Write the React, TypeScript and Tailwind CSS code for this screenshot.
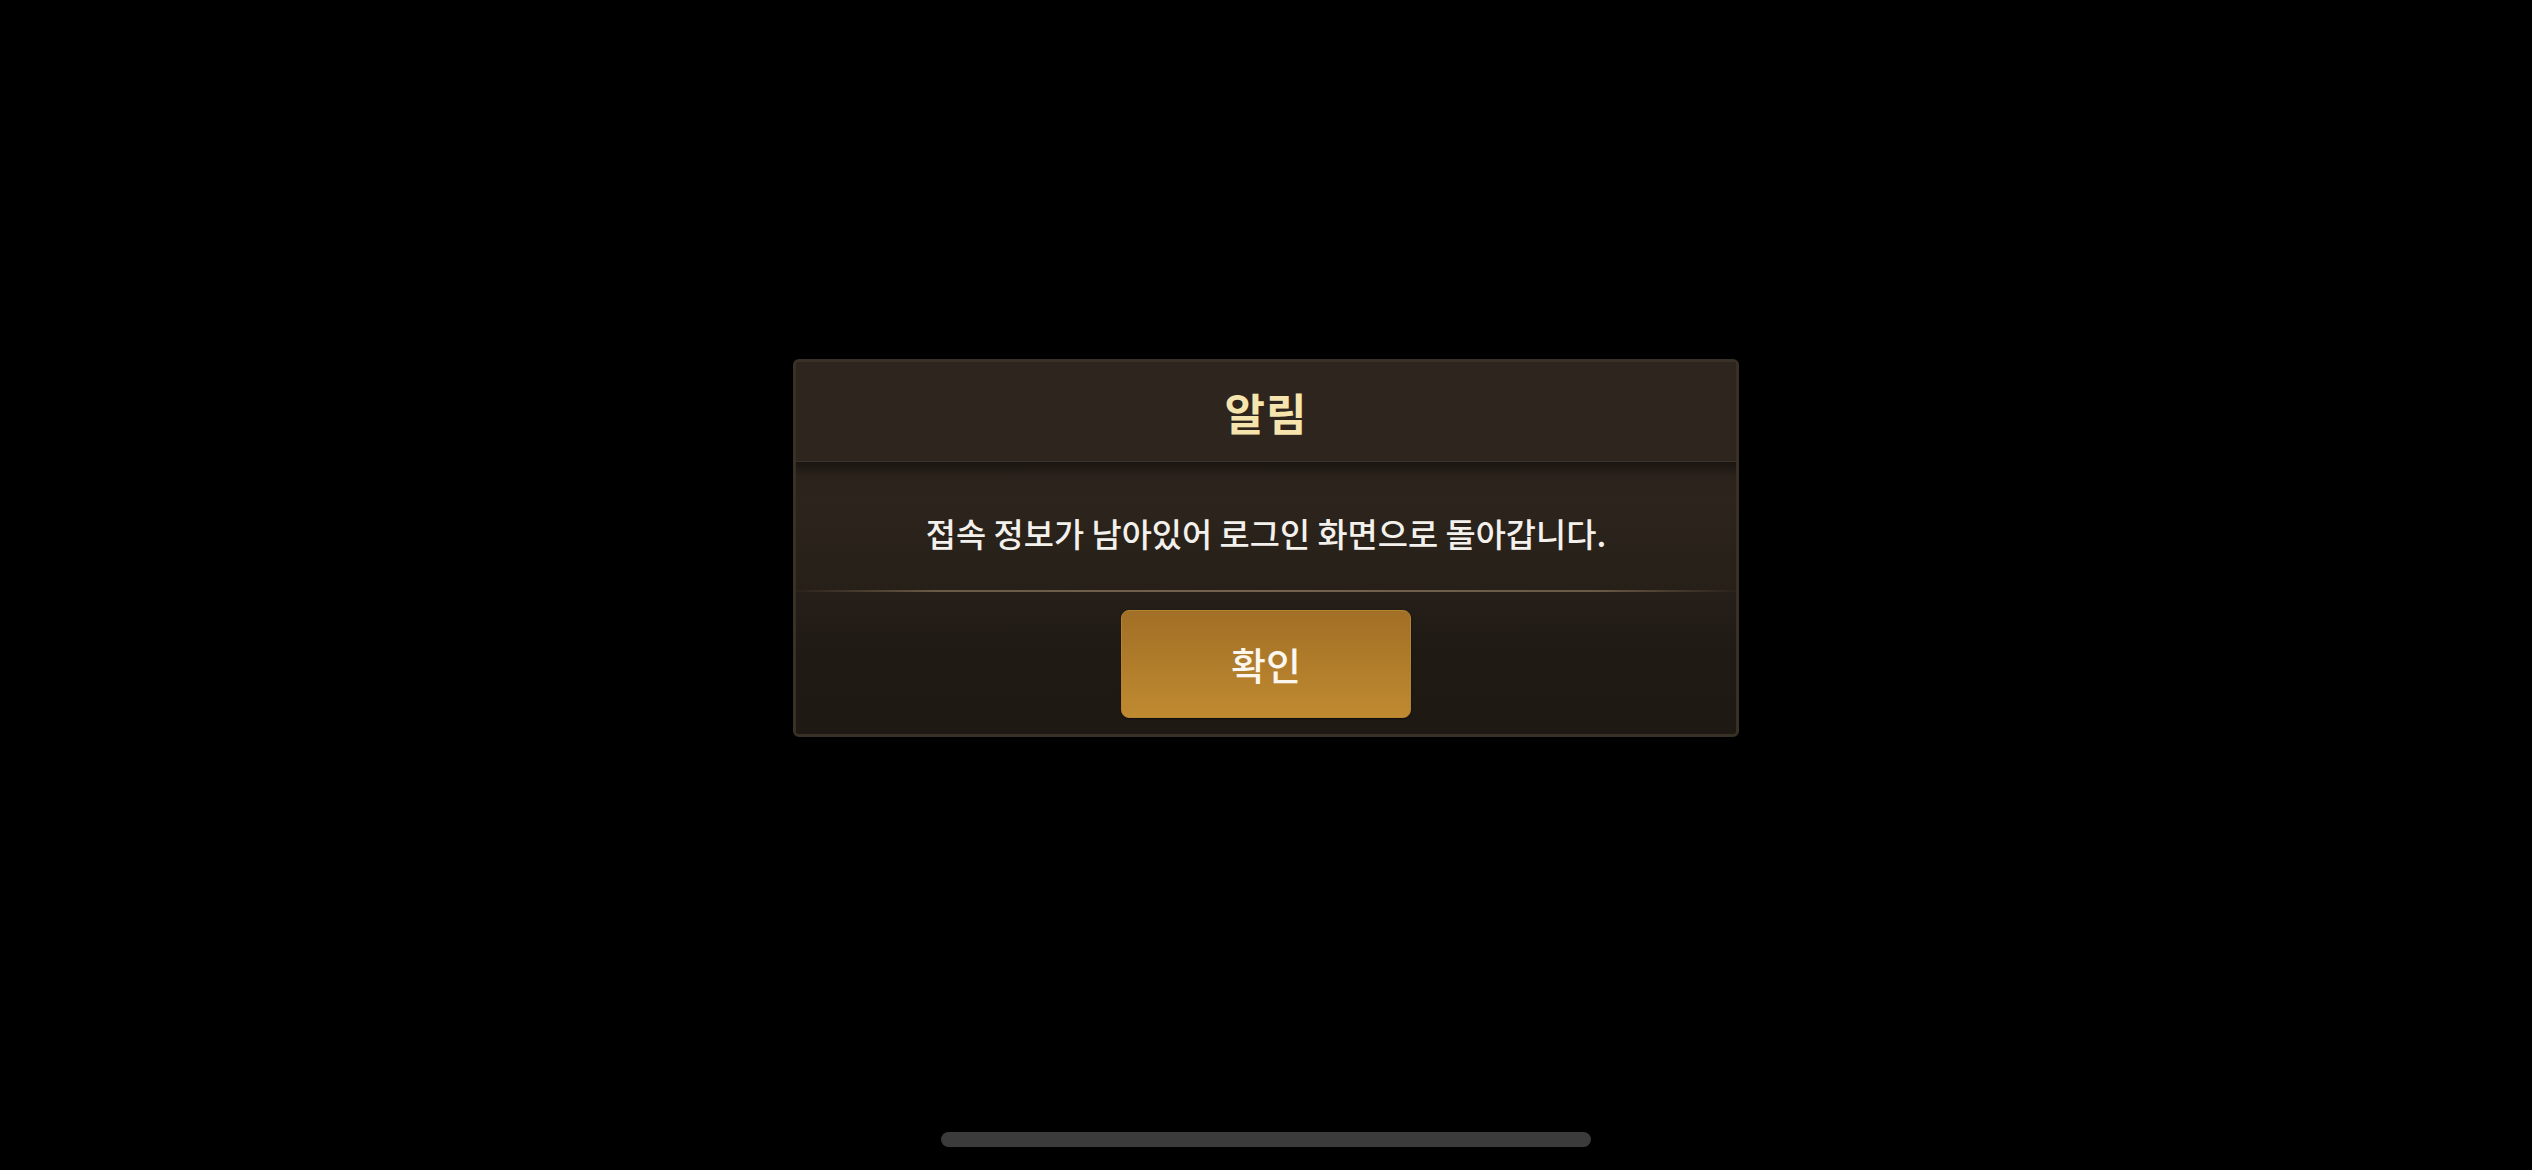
export default function App() {
  return (
    <div
      className="w-[2532px] h-[1170px] bg-black flex flex-col items-center pt-[359px] overflow-hidden"
      style={{ fontFamily: '"Noto Sans CJK KR", "Noto Sans", sans-serif' }}
    >
      {/* 알림 팝업 */}
      <div className="w-[946px] h-[378px] rounded-[6px] border-[3px] border-[#3a3126] bg-[#211b16] flex flex-col overflow-hidden shadow-[inset_0_0_0_1px_#2a231b]">
        <div className="h-[100px] shrink-0 bg-[#2e251e] flex items-center justify-center border-b border-[#3c3229]">
          <span className="text-[44px] font-bold leading-none text-[#f6e4ae] tracking-[1px]">알림</span>
        </div>

        <div className="h-[128px] shrink-0 flex items-center justify-center pt-[14px] bg-[linear-gradient(to_bottom,#1a1511_0px,#2a221b_14px,#2c241d_40px,#262019_100%)]">
          <p className="text-[32.8px] font-medium leading-none text-[#f4f1ec]">
            접속 정보가 남아있어 로그인 화면으로 돌아갑니다.
          </p>
        </div>

        <div className="h-[2px] shrink-0 bg-[linear-gradient(to_right,#2a221b_0%,#6b5a46_15%,#756350_50%,#6b5a46_85%,#2a221b_100%)]" />

        <div className="flex-1 flex justify-center pt-[18px] bg-[linear-gradient(to_bottom,#261f19,#201a15_40%,#1f1914)]">
          <button className="w-[290px] h-[108px] rounded-[8px] border border-[#b5842f] bg-[linear-gradient(to_bottom,#a16f26,#bf8a30)] flex items-center justify-center shadow-[0_1px_2px_rgba(0,0,0,0.5)]">
            <span className="text-[38px] font-medium leading-none text-[#fbf6ee]">확인</span>
          </button>
        </div>
      </div>

      {/* 홈 인디케이터 */}
      <div className="mt-auto mb-[23px] w-[650px] h-[15px] rounded-full bg-[#3b3b3b]" />
    </div>
  )
}
